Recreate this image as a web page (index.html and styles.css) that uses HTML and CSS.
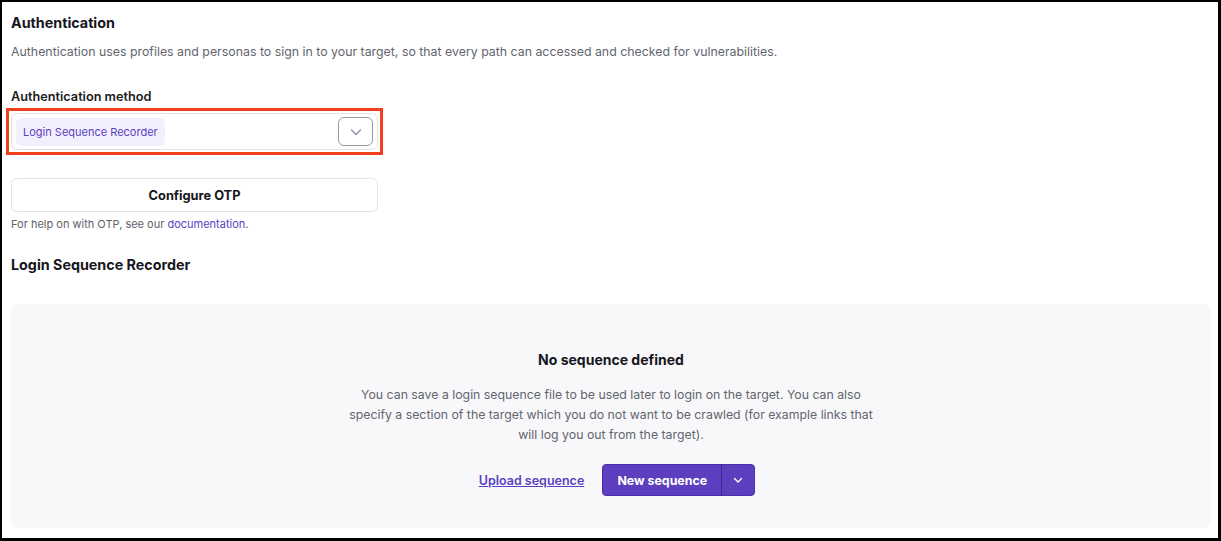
FILE: index.html
```html
<!DOCTYPE html>
<html lang="en">
<head>
<meta charset="utf-8">
<title>Authentication</title>
<link rel="stylesheet" href="styles.css">
</head>
<body>
<div class="frame">
  <h1 class="title">Authentication</h1>
  <p class="desc">Authentication uses profiles and personas to sign in to your target, so that every path can accessed and checked for vulnerabilities.</p>
  <div class="label">Authentication method</div>
  <div class="highlight">
    <div class="select">
      <span class="chip">Login Sequence Recorder</span>
      <span class="select-btn">
        <svg width="14" height="14" viewBox="0 0 14 14"><path d="M2.5 5 L7 9.5 L11.5 5" fill="none" stroke="#8d93a6" stroke-width="1.4" stroke-linecap="round" stroke-linejoin="round"/></svg>
      </span>
    </div>
  </div>
  <button class="otp">Configure OTP</button>
  <p class="help">For help on with OTP, see our <a href="#" class="link">documentation</a>.</p>
  <h2 class="subtitle">Login Sequence Recorder</h2>
  <div class="panel">
    <div class="panel-title">No sequence defined</div>
    <p class="panel-text">You can save a login sequence file to be used later to login on the target. You can also specify a section of the target which you do not want to be crawled (for example links that will log you out from the target).</p>
    <div class="actions">
      <a href="#" class="upload">Upload sequence</a>
      <div class="split">
        <span class="split-main">New sequence</span>
        <span class="split-arrow">
          <svg width="12" height="12" viewBox="0 0 12 12"><path d="M2.5 4.5 L6 8 L9.5 4.5" fill="none" stroke="#ffffff" stroke-width="1.4" stroke-linecap="round" stroke-linejoin="round"/></svg>
        </span>
      </div>
    </div>
  </div>
</div>
</body>
</html>
```
FILE: styles.css
```css
* { box-sizing: border-box; }
html, body { margin: 0; padding: 0; background: #fff; }
body {
  font-family: "Inter", "Lato", sans-serif;
  color: #1c1c22;
}
.frame {
  width: 1221px;
  height: 541px;
  border-style: solid;
  border-color: #000;
  border-width: 2px 3px 3px 2px;
  padding: 11px 7px 0 9px;
  overflow: hidden;
}
.title {
  margin: 0;
  font-size: 14.3px;
  line-height: 20px;
  font-weight: 700;
  color: #16161c;
}
.desc {
  margin: 9px 0 0;
  font-size: 12.35px;
  line-height: 20px;
  color: #62656e;
}
.label {
  margin-top: 26px;
  font-size: 12.7px;
  line-height: 18px;
  font-weight: 600;
  color: #1c1c22;
}
.highlight {
  margin: 2px 0 0 -5px;
  width: 377px;
  border: 3px solid #f0401b;
  padding: 2px;
}
.select {
  width: 367px;
  height: 37px;
  border: 1px solid #e1e1e6;
  border-radius: 6px;
  display: flex;
  align-items: center;
  justify-content: space-between;
  padding: 0 4px 0 4px;
}
.chip {
  background: #f3f0fd;
  color: #5b40c2;
  font-size: 11px;
  border-radius: 5px;
  height: 28px;
  line-height: 28px;
  padding: 0 7px;
}
.select-btn {
  width: 35px;
  height: 29px;
  border: 1px solid #9a9aa2;
  border-radius: 6px;
  display: flex;
  align-items: center;
  justify-content: center;
}
.otp {
  display: block;
  margin-top: 23px;
  width: 367px;
  height: 34px;
  background: #fff;
  border: 1px solid #e3e3e8;
  border-radius: 6px;
  font-family: inherit;
  font-size: 12.8px;
  font-weight: 700;
  color: #16161c;
}
.help {
  margin: 4px 0 0;
  font-size: 11px;
  line-height: 16px;
  color: #5f626b;
}
.link { color: #5b40c2; text-decoration: none; }
.subtitle {
  margin: 23px 0 0;
  font-size: 14.3px;
  line-height: 20px;
  font-weight: 700;
  color: #16161c;
}
.panel {
  margin-top: 29px;
  width: 1200px;
  height: 224px;
  background: #f8f8fa;
  border-radius: 8px;
  padding-top: 46px;
  display: flex;
  flex-direction: column;
  align-items: center;
}
.panel-title {
  font-size: 14px;
  line-height: 20px;
  font-weight: 700;
  color: #16161c;
}
.panel-text {
  margin: 15px 0 0;
  width: 540px;
  text-align: center;
  font-size: 12.3px;
  line-height: 20px;
  color: #62656e;
}
.actions {
  margin: 19px 0 0 12px;
  display: flex;
  align-items: center;
  gap: 18px;
}
.upload {
  color: #5b40c2;
  font-size: 12.5px;
  font-weight: 600;
  text-decoration: underline;
}
.split {
  display: flex;
  height: 32px;
  background: #5c3ebf;
  border: 1px solid #4b2fa8;
  border-radius: 4px;
  color: #fff;
}
.split-main {
  width: 119px;
  display: flex;
  align-items: center;
  justify-content: center;
  font-size: 12.4px;
  font-weight: 700;
  border-right: 1px solid #3f2593;
}
.split-arrow {
  width: 32px;
  display: flex;
  align-items: center;
  justify-content: center;
}
```
